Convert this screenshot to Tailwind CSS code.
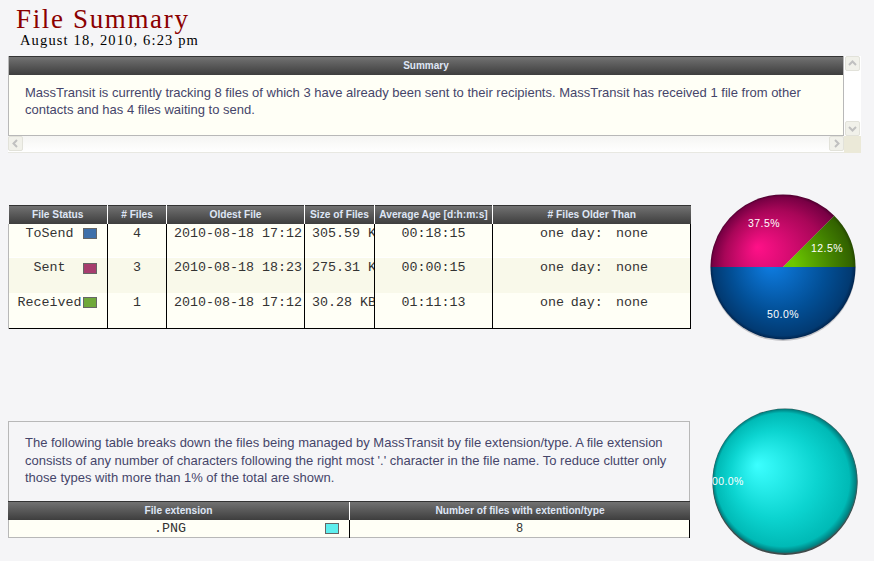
<!DOCTYPE html>
<html lang="en">
<head>
    <meta charset="UTF-8">
    <title>File Summary</title>
    <script src="https://cdn.jsdelivr.net/npm/@tailwindcss/browser@4"></script>
</head>
<body class="bg-[#f5f5f7] h-[561px] w-[874px] overflow-hidden pl-2 font-['Liberation_Sans',sans-serif]">

    <!-- Title -->
    <div class="h-[56px] pl-2 pt-[5px]">
        <h1 class="font-['Liberation_Serif',serif] text-[27px] leading-[28px] tracking-[1.65px] text-[#8b0000]">File Summary</h1>
        <p class="pl-[4px] font-['Liberation_Serif',serif] oldstyle-nums text-[14.5px] leading-[15px] tracking-[1.15px] text-black">August 18, 2010, 6:23 pm</p>
    </div>

    <!-- Summary box with its scrollbars -->
    <div class="w-[853px] grid grid-cols-[836px_17px] grid-rows-[80px_17px]">
        <div class="border-x border-b border-[#b8b8b8] bg-[#fffff6]">
            <div class="h-[19px] border-t border-[#333] bg-gradient-to-b from-[#727272] to-[#3e3e3e] text-center text-[10px] leading-[18px] font-bold text-[#dfe6f5]">Summary</div>
            <p class="px-4 pt-[9px] text-[13px] leading-[17px] text-[#45456a]">MassTransit is currently tracking 8 files of which 3 have already been sent to their recipients. MassTransit has received 1 file from other contacts and has 4 files waiting to send.</p>
        </div>
        <!-- vertical scrollbar -->
        <div class="bg-white flex flex-col justify-between">
            <div class="w-[15px] h-[15px] ml-[1px] rounded-[2px] border border-[#e2e2da] bg-[#f1f1ea] flex items-center justify-center">
                <svg width="9" height="7" viewBox="0 0 9 7"><path d="M1 5l3.500-3.500L8 5" fill="none" stroke="#c0c0c0" stroke-width="2"/></svg>
            </div>
            <div class="w-[15px] h-[15px] ml-[1px] rounded-[2px] border border-[#e2e2da] bg-[#f1f1ea] flex items-center justify-center">
                <svg width="9" height="7" viewBox="0 0 9 7"><path d="M1 2l3.500 3.500L8 2" fill="none" stroke="#c0c0c0" stroke-width="2"/></svg>
            </div>
        </div>
        <!-- horizontal scrollbar -->
        <div class="bg-gradient-to-b from-[#f5f5f3] to-white border-b border-[#e8e8e2] flex justify-between">
            <div class="w-[15px] h-[15px] rounded-[2px] border border-[#e2e2da] bg-[#f1f1ea] flex items-center justify-center">
                <svg width="7" height="9" viewBox="0 0 7 9"><path d="M5 1L1.500 4.500 5 8" fill="none" stroke="#c0c0c0" stroke-width="2"/></svg>
            </div>
            <div class="w-[15px] h-[15px] rounded-[2px] border border-[#e2e2da] bg-[#f1f1ea] flex items-center justify-center">
                <svg width="7" height="9" viewBox="0 0 7 9"><path d="M2 1l3.500 3.500L2 8" fill="none" stroke="#c0c0c0" stroke-width="2"/></svg>
            </div>
        </div>
        <div class="bg-[#ebe9d8]"></div>
    </div>

    <!-- File status table + pie -->
    <div class="flex mt-[41px] h-[147px]">
        <div class="w-[683px] pt-[11px]">
            <table class="table-fixed border-collapse w-[682px] font-['Liberation_Mono',monospace] text-[13.33px] text-[#333]">
                <colgroup>
                    <col class="w-[99px]"><col class="w-[59px]"><col class="w-[138px]"><col class="w-[70px]"><col class="w-[118px]"><col class="w-[198px]">
                </colgroup>
                <thead>
                    <tr class="h-[18px] bg-gradient-to-b from-[#727272] to-[#3e3e3e] font-['Liberation_Sans',sans-serif] text-[10.2px] font-bold text-[#dfe6f5]">
                        <th class="border-t border-t-[#333] border-r border-r-white p-0">File Status</th>
                        <th class="border-t border-t-[#333] border-r border-r-white p-0"># Files</th>
                        <th class="border-t border-t-[#333] border-r border-r-white p-0">Oldest File</th>
                        <th class="border-t border-t-[#333] border-r border-r-white p-0 whitespace-nowrap">Size of Files</th>
                        <th class="border-t border-t-[#333] border-r border-r-white p-0 whitespace-nowrap">Average Age [d:h:m:s]</th>
                        <th class="border-t border-t-[#333] p-0"># Files Older Than</th>
                    </tr>
                </thead>
                <tbody class="align-top leading-[20px]">
                    <tr class="h-[34px] bg-[#fffff6]">
                        <td class="border-l border-l-[#b8b8b8] border-r border-r-black p-0"><div class="flex items-center pl-[7px]"><span class="w-[67px] text-center">ToSend</span><span class="w-[14px] h-[11px] border border-[#666] bg-[#3f70aa]"></span></div></td>
                        <td class="border-r border-r-black p-0 text-center">4</td>
                        <td class="border-r border-r-black p-0 pl-[7px] whitespace-nowrap">2010-08-18 17:12</td>
                        <td class="border-r border-r-black p-0 pl-[7px]"><div class="w-[62px] overflow-hidden whitespace-nowrap">305.59 KB</div></td>
                        <td class="border-r border-r-black p-0 text-center">00:18:15</td>
                        <td class="border-r border-r-black p-0 pl-[5px] text-center whitespace-pre [word-spacing:-1.33px]">one day:  none</td>
                    </tr>
                    <tr class="h-[35px] bg-[#f9f9ea] border-t border-t-white">
                        <td class="border-l border-l-[#b8b8b8] border-r border-r-black p-0"><div class="flex items-center pl-[7px]"><span class="w-[67px] text-center">Sent</span><span class="w-[14px] h-[11px] border border-[#666] bg-[#a73d6e]"></span></div></td>
                        <td class="border-r border-r-black p-0 text-center">3</td>
                        <td class="border-r border-r-black p-0 pl-[7px] whitespace-nowrap">2010-08-18 18:23</td>
                        <td class="border-r border-r-black p-0 pl-[7px]"><div class="w-[62px] overflow-hidden whitespace-nowrap">275.31 KB</div></td>
                        <td class="border-r border-r-black p-0 text-center">00:00:15</td>
                        <td class="border-r border-r-black p-0 pl-[5px] text-center whitespace-pre [word-spacing:-1.33px]">one day:  none</td>
                    </tr>
                    <tr class="h-[36px] bg-[#fffff6] border-b border-b-black">
                        <td class="border-l border-l-[#b8b8b8] border-r border-r-black p-0"><div class="flex items-center pl-[7px]"><span class="w-[67px] text-center">Received</span><span class="w-[14px] h-[11px] border border-[#666] bg-[#6fa83a]"></span></div></td>
                        <td class="border-r border-r-black p-0 text-center">1</td>
                        <td class="border-r border-r-black p-0 pl-[7px] whitespace-nowrap">2010-08-18 17:12</td>
                        <td class="border-r border-r-black p-0 pl-[7px]"><div class="w-[62px] overflow-hidden whitespace-nowrap">30.28 KB</div></td>
                        <td class="border-r border-r-black p-0 text-center">01:11:13</td>
                        <td class="border-r border-r-black p-0 pl-[5px] text-center whitespace-pre [word-spacing:-1.33px]">one day:  none</td>
                    </tr>
                </tbody>
            </table>
        </div>
        <svg class="ml-[19px] shrink-0" width="150" height="150" viewBox="0 0 150 150">
            <defs>
                <radialGradient id="m" gradientUnits="userSpaceOnUse" cx="73" cy="73" r="72.500" fx="47" fy="53"><stop offset="0" stop-color="#ff1188"/><stop offset="0.7" stop-color="#a80658"/><stop offset="0.95" stop-color="#780044"/><stop offset="1" stop-color="#500030"/></radialGradient>
                <radialGradient id="g" gradientUnits="userSpaceOnUse" cx="73" cy="73" r="72.500"><stop offset="0.15" stop-color="#6cc800"/><stop offset="0.7" stop-color="#428000"/><stop offset="0.95" stop-color="#326200"/><stop offset="1" stop-color="#264a00"/></radialGradient>
                <radialGradient id="b" gradientUnits="userSpaceOnUse" cx="73" cy="73" r="72.500" fx="60" fy="68"><stop offset="0" stop-color="#0f7fe6"/><stop offset="0.65" stop-color="#024f96"/><stop offset="0.95" stop-color="#023a72"/><stop offset="1" stop-color="#01254f"/></radialGradient>
            </defs>
            <circle cx="73" cy="74.500" r="72.500" fill="#c4c4c8"/>
            <path d="M73 73L124.300 21.700A72.500 72.500 0 0 0 0.500 73Z" fill="url(#m)"/>
            <path d="M73 73H145.500A72.500 72.500 0 0 0 124.300 21.700Z" fill="url(#g)"/>
            <path d="M0.500 73A72.500 72.500 0 0 0 145.500 73Z" fill="url(#b)"/>
            <g font-family="Liberation Sans, sans-serif" font-size="10.500" letter-spacing="0.4" fill="#fff" text-anchor="middle">
                <text x="54" y="33">37.5%</text>
                <text x="117" y="58">12.5%</text>
                <text x="73" y="124">50.0%</text>
            </g>
        </svg>
    </div>

    <!-- File extension table + pie -->
    <div class="flex mt-[72px]">
        <div class="w-[682px] pt-[8px]">
            <div class="h-[80px] border-x border-t border-[#b8b8b8] px-4 pt-[12px]">
                <p class="text-[13px] leading-[17.500px] text-[#45456a]">The following table breaks down the files being managed by MassTransit by file extension/type. A file extension consists of any number of characters following the right most '.' character in the file name. To reduce clutter only those types with more than 1% of the total are shown.</p>
            </div>
            <div class="grid grid-cols-[342px_340px] h-[19px] bg-gradient-to-b from-[#727272] to-[#3e3e3e] border-t border-[#333] text-center text-[10.2px] leading-[18px] font-bold text-[#dfe6f5]">
                <div class="border-r border-white">File extension</div>
                <div>Number of files with extention/type</div>
            </div>
            <div class="grid grid-cols-[341px_340px] h-[18px] bg-[#fffff6] border-l border-l-[#b8b8b8] border-b border-b-[#b8b8b8] leading-[18px] font-['Liberation_Mono',monospace] text-[13.33px] text-[#333]">
                <div class="relative border-r border-black pr-[18px] text-center">.PNG
                    <span class="absolute right-[10px] top-[3px] w-[14px] h-[11px] border border-[#666] bg-[#5eeeee]"></span>
                </div>
                <div class="text-center border-r border-r-black text-[12px]">8</div>
            </div>
        </div>
        <svg class="ml-[22px] -mt-[5px] shrink-0" width="148" height="150" viewBox="0 0 148 150">
            <defs>
                <radialGradient id="c" gradientUnits="userSpaceOnUse" cx="73" cy="73" r="72.500" fx="45" fy="57"><stop offset="0" stop-color="#3cffff"/><stop offset="0.6" stop-color="#0cd4d0"/><stop offset="0.92" stop-color="#00bab6"/><stop offset="0.98" stop-color="#008484"/><stop offset="1" stop-color="#2e5e5e"/></radialGradient>
            </defs>
            <circle cx="73" cy="74.500" r="72.500" fill="#3f4a4a"/>
            <circle cx="73" cy="73" r="72.500" fill="url(#c)"/>
            <text x="0" y="77" font-family="Liberation Sans, sans-serif" font-size="10.500" letter-spacing="0.4" fill="#fff">00.0%</text>
        </svg>
    </div>
</body>
</html>
